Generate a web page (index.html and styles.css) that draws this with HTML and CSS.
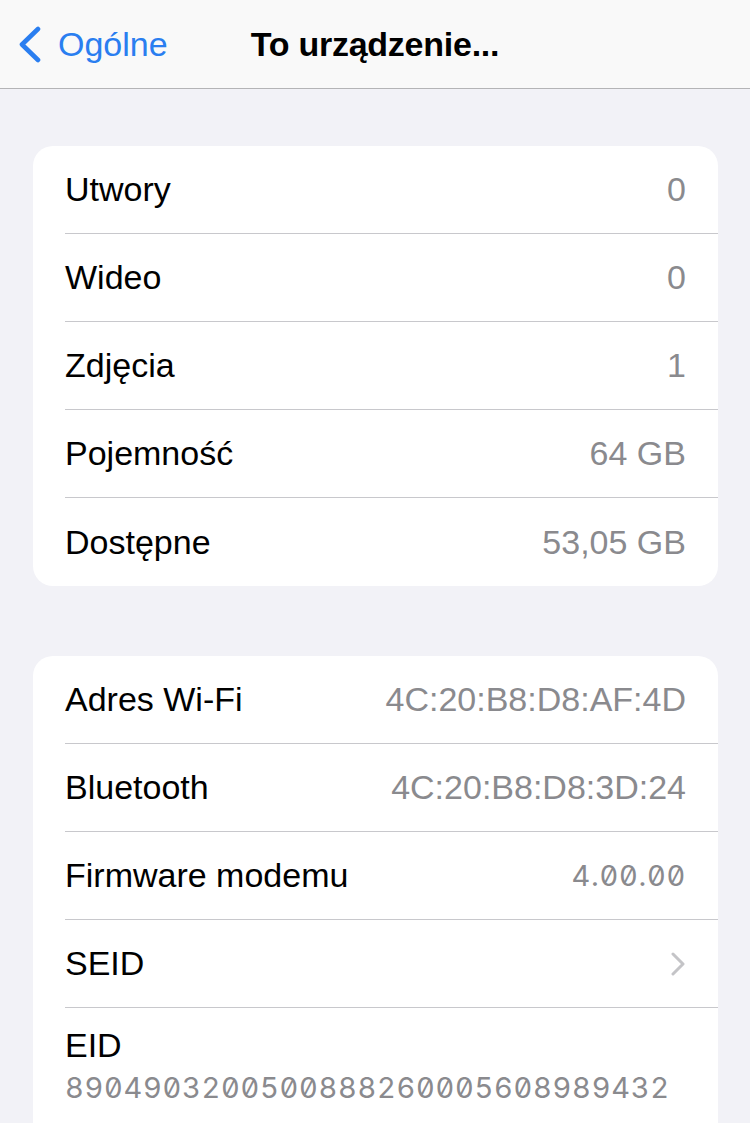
FILE: index.html
```html
<!DOCTYPE html>
<html lang="pl">
<head>
<meta charset="UTF-8" />
<meta name="viewport" content="width=device-width, initial-scale=1" />
<title>To urządzenie...</title>
<link rel="stylesheet" href="styles.css">
</head>
<body>
<header class="navbar">
  <a class="back" href="#">
    <svg class="back-icon" width="24" height="37" viewBox="0 0 24 37" aria-hidden="true">
      <polyline points="20,3 4,18.5 20,34" fill="none" stroke="currentColor" stroke-width="4.6" stroke-linecap="round" stroke-linejoin="round" />
    </svg>
    <span>Ogólne</span>
  </a>
  <h1 class="title">To urządzenie...</h1>
  <span></span>
</header>

<main class="content">
  <section class="group">
    <div class="row"><div class="row-body"><span class="label">Utwory</span><span class="value">0</span></div></div>
    <div class="row"><div class="row-body"><span class="label">Wideo</span><span class="value">0</span></div></div>
    <div class="row"><div class="row-body"><span class="label">Zdjęcia</span><span class="value">1</span></div></div>
    <div class="row"><div class="row-body"><span class="label">Pojemność</span><span class="value">64 GB</span></div></div>
    <div class="row"><div class="row-body"><span class="label">Dostępne</span><span class="value">53,05 GB</span></div></div>
  </section>

  <section class="group">
    <div class="row"><div class="row-body"><span class="label">Adres Wi-Fi</span><span class="value">4C:20:B8:D8:AF:4D</span></div></div>
    <div class="row"><div class="row-body"><span class="label">Bluetooth</span><span class="value">4C:20:B8:D8:3D:24</span></div></div>
    <div class="row"><div class="row-body"><span class="label">Firmware modemu</span><span class="value mono">4.00.00</span></div></div>
    <div class="row"><div class="row-body">
      <span class="label">SEID</span>
      <svg class="chevron" width="16" height="24" viewBox="0 0 16 24" aria-hidden="true">
        <polyline points="3,2 13,12 3,22" fill="none" stroke="currentColor" stroke-width="3" stroke-linecap="round" stroke-linejoin="round" />
      </svg>
    </div></div>
    <div class="row row-stacked"><div class="row-body">
      <span class="label">EID</span>
      <span class="value mono eid">89049032005008882600056089894321</span>
    </div></div>
  </section>
</main>
</body>
</html>
```

FILE: styles.css
```css
body {
  margin: 0;
  background: #f2f2f7;
  font-family: 'Liberation Sans', Arial, sans-serif;
  color: #000;
  height: 1123px;
  overflow: hidden;
}
.navbar {
  height: 88px;
  display: grid;
  grid-template-columns: 1fr auto 1fr;
  align-items: center;
  background: #f9f9f9;
  border-bottom: 1px solid #b4b4b6;
}
.back {
  display: flex;
  align-items: center;
  gap: 16px;
  padding-left: 18px;
  color: #2a7ef0;
  text-decoration: none;
  font-size: 34px;
}
.back-icon {
  display: block;
}
.title {
  margin: 0;
  font-size: 34px;
  font-weight: 700;
  letter-spacing: -0.25px;
}
.content {
  padding: 57px 32px 0 33px;
  display: flex;
  flex-direction: column;
  gap: 70px;
}
.group {
  background: #fff;
  border-radius: 20px;
  overflow: hidden;
}
.row {
  padding-left: 32px;
}
.row-body {
  height: 88px;
  display: flex;
  align-items: center;
  justify-content: space-between;
  padding-right: 32px;
  border-bottom: 1px solid #c8c8cc;
  box-sizing: border-box;
  font-size: 34px;
}
.row:last-child .row-body {
  border-bottom: none;
}
.value {
  color: #8a8a8e;
}
.mono {
  font-family: Inter, 'Liberation Sans', sans-serif;
  font-size: 29px;
  font-feature-settings: "tnum" 1, "zero" 1;
  letter-spacing: 0.7px;
}
.chevron {
  display: block;
  color: #c4c4c7;
}
.row-stacked .row-body {
  height: auto;
  flex-direction: column;
  align-items: flex-start;
  justify-content: flex-start;
  padding-top: 17px;
  padding-bottom: 20px;
  line-height: 40px;
}
.eid {
  word-break: break-all;
  line-height: 46px;
}
```
